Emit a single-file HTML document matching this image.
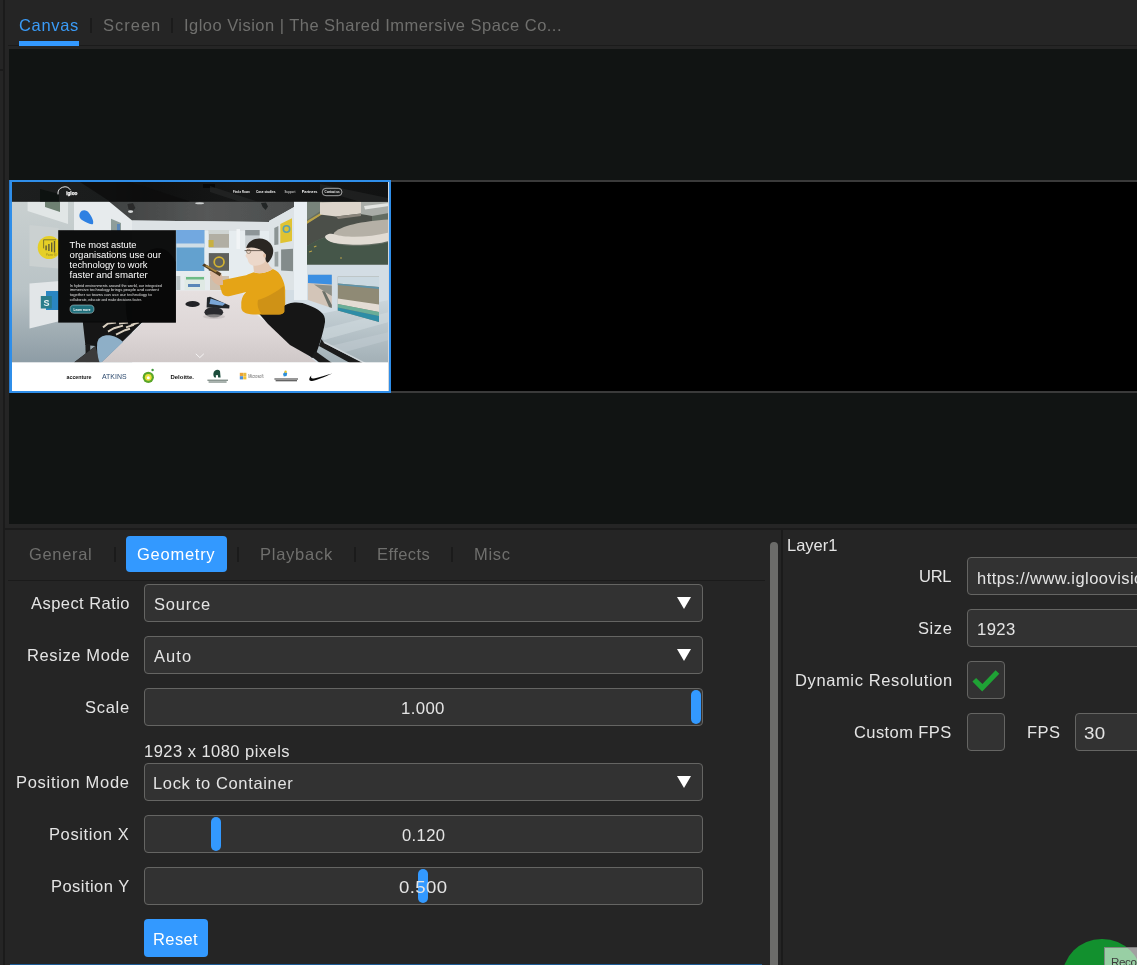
<!DOCTYPE html>
<html lang="en">
<head>
<meta charset="utf-8">
<title>Canvas</title>
<style>
html,body{margin:0;padding:0;}
body{width:1137px;height:965px;overflow:hidden;background:#252525;position:relative;font-family:"Liberation Sans",sans-serif;}
.a{position:absolute;}
.t{position:absolute;transform-origin:0 0;will-change:transform;white-space:pre;line-height:20px;height:20px;}
.box{position:absolute;box-sizing:border-box;background:#323232;border:1px solid #656563;border-radius:4px;}
.sep{position:absolute;width:2px;height:14.5px;background:#1b1b1b;}
.h{position:absolute;background:#3399ff;border-radius:5px;}
.tri{position:absolute;width:0;height:0;border-left:7.5px solid transparent;border-right:7.5px solid transparent;border-top:12px solid #fff;}
</style>
</head>
<body>
<!-- frame dividers -->
<div class="a" style="left:3px;top:0;width:2px;height:965px;background:#1b1b1b"></div>
<div class="a" style="left:0;top:69px;width:3px;height:2px;background:#1b1b1b"></div>
<div class="a" style="left:8px;top:45px;width:1129px;height:1px;background:#1b1b1b"></div>
<div class="a" style="left:19px;top:41px;width:60px;height:5px;background:#3399ff"></div>
<div class="sep" style="left:90px;top:18px"></div>
<div class="sep" style="left:171px;top:18px"></div>

<!-- canvas -->
<div class="a" style="left:9px;top:49px;width:1128px;height:475px;background:#111413"></div>
<div class="a" style="left:9px;top:180px;width:1140px;height:213px;box-sizing:border-box;background:#000;border:2px solid #3a3a3a"></div>
<div class="a" style="left:9px;top:180px;width:1px;height:213px;background:#2779cb"></div>
<div class="a" id="layer" style="left:10px;top:180px;width:381px;height:213px;box-sizing:border-box;border:2px solid #2f8ee9;background:#fff;overflow:hidden">
<svg class="a" style="left:0;top:0;will-change:transform" width="377" height="209" viewBox="12 182 377 209">
<defs>
<filter id="bl" x="-5%" y="-5%" width="110%" height="110%"><feGaussianBlur stdDeviation="0.45"/></filter>
<filter id="bl2" x="-5%" y="-5%" width="110%" height="110%"><feGaussianBlur stdDeviation="1.2"/></filter>
<linearGradient id="lw" x1="0" y1="0" x2="0" y2="1"><stop offset="0" stop-color="#c9d0d0"/><stop offset="0.55" stop-color="#b9c3c6"/><stop offset="1" stop-color="#8d9ca5"/></linearGradient>
<linearGradient id="ceil" x1="0" y1="0" x2="1" y2="0"><stop offset="0" stop-color="#3f4141"/><stop offset="0.5" stop-color="#565858"/><stop offset="1" stop-color="#4a4c4c"/></linearGradient>
<linearGradient id="fl" x1="0" y1="0" x2="0" y2="1"><stop offset="0" stop-color="#c9d4d9"/><stop offset="1" stop-color="#9aa8ae"/></linearGradient>
<linearGradient id="tb" x1="0" y1="0" x2="0" y2="1"><stop offset="0" stop-color="#e6e0e0"/><stop offset="0.6" stop-color="#ddd6d6"/><stop offset="1" stop-color="#cfc8c8"/></linearGradient>
<linearGradient id="hd" x1="0" y1="0" x2="1" y2="0"><stop offset="0" stop-color="#1d1f1f"/><stop offset="0.25" stop-color="#1a1c1c"/><stop offset="0.35" stop-color="#0e0f0f"/><stop offset="0.6" stop-color="#161717"/><stop offset="1" stop-color="#111212"/></linearGradient>
<clipPath id="cp"><rect x="12" y="201" width="376" height="161.6"/></clipPath>
</defs>
<g clip-path="url(#cp)"><g filter="url(#bl)">
<!-- base: back wall -->
<rect x="12" y="201" width="377" height="162" fill="#e6ecef"/>
<!-- left wall -->
<polygon points="12,201 108.5,201 132.2,220.5 132.2,363 12,363" fill="url(#lw)"/>
<!-- left wall panels -->
<polygon points="27.6,201 68,201 68,224 27.6,211" fill="#e1e6e6"/>
<polygon points="45,201 60,201 60,212 45,207" fill="#6e8072"/>
<polygon points="74,201 108.5,201 132.2,220.5 132.2,231 74,231" fill="#e7ebed"/>
<path d="M80 213 C82 209 87 210 89 213 C92 217 94 221 93 224 C90 225 86 222 82 220 C79 218 79 215 80 213Z" fill="#2d80e2"/>
<polygon points="111,218.7 121,223 121,231 111,231" fill="#8e9d9a"/><rect x="117" y="224" width="3" height="7" fill="#5a86b8"/>
<polygon points="29.5,225 58.5,228 58.5,268.5 29.5,266" fill="#cbd1d1"/>
<circle cx="49.3" cy="247.5" r="11.6" fill="#e6cf26"/>
<path d="M43.6 248.4v-8.6h12.4" fill="none" stroke="#55532e" stroke-width="0.7"/>
<path d="M45.4 245.6v4.6h1.4v-4.6zm2.8 -1.6v7h1.4v-7zm2.8 -1.6v9.4h1.4v-9.4zm2.8 -1.4v11.6h1.4v-11.6z" fill="#5f5c36"/>
<text x="46" y="255.6" font-family="'Liberation Sans',sans-serif" font-size="2.6" fill="#9a8a22">Power BI</text>
<polygon points="29.5,283.6 60,281 60,321 29.5,328.6" fill="#e2e6e8"/>
<rect x="46" y="291" width="13" height="19" fill="#2a86c2"/>
<rect x="40.8" y="296" width="11" height="12.5" fill="#2b7d8c"/>
<text x="43.4" y="305.6" font-family="'Liberation Sans',sans-serif" font-size="9" font-weight="bold" fill="#e9f1f3">S</text>
<!-- ceiling -->
<polygon points="108.5,201 306.3,201 294.4,207 268.9,222 132.2,220.5" fill="url(#ceil)"/>
<polygon points="132.2,220.5 268.9,222 268.9,231 132.2,231" fill="#dde2e5"/>
<ellipse cx="199.6" cy="203.2" rx="4.4" ry="1" fill="#c9cccc"/>
<polygon points="261,203 266,202.4 268,206.4 265.6,210 262.6,207" fill="#242626"/>
<polygon points="127.4,204 133,203 135.4,208 132,212 128.4,209" fill="#2a2c2c"/>
<ellipse cx="130.6" cy="211.6" rx="2.6" ry="1.3" fill="#d9dcdc"/>
<!-- right wall -->
<polygon points="269,221 306,201 389,201 389,363 269,363" fill="#d3dde4"/>
<polygon points="269,221 294,207 294,290 269,290" fill="#dde3e6"/>
<polygon points="294,201 307,201 307,300 294,300" fill="#e9eff3"/>
<polygon points="280.3,224 292,218.2 292,241 280.3,243.2" fill="#e0c332"/>
<circle cx="286.5" cy="229" r="3.2" fill="none" stroke="#5aa0b0" stroke-width="1.6"/>
<polygon points="274.3,228 278.4,226 278.4,244.4 274.3,245" fill="#8c9494"/>
<polygon points="274.6,252 278.3,251.6 278.3,266.4 274.6,266.4" fill="#9aa2a2"/>
<polygon points="281.1,249.6 293,248.7 293,271.3 281.1,270.4" fill="#838b8b"/>
<!-- big aerial picture -->
<rect x="307" y="201" width="82" height="63.6" fill="#646d63"/>
<polygon points="307,201 322,201 322,210 307,220" fill="#78837a"/>
<polygon points="307,221 324,211 324,213.4 307,224" fill="#b9a24a"/>
<polygon points="307,224 322,214.5 372,214.5 372,234 333,234 318,240 307,246" fill="#4b4f49"/>
<polygon points="320,202.3 361,201.5 361,213.4 336,216.4 320,214.6" fill="#dcd5cb"/>
<polygon points="336,216.4 361,213.4 361,216 338,219" fill="#8a857c"/>
<polygon points="361,201.5 389,201.5 389,213 372,216 361,214" fill="#a9ada8"/>
<polygon points="364,206 389,203 389,206 365,209.4" fill="#e3e5e2"/>
<path d="M333.8 233 C340 226 362 221 389 219.5 L389 237 C370 240 350 241 333.8 236Z" fill="#b5b0a6"/>
<path d="M325.2 236 C328 233.5 332 233.4 335 234.6 C345 238 370 237.6 389 232.6 L389 241 C372 245.6 345 246 331 242 C327 240.6 324.6 238.4 325.2 236Z" fill="#e1dbd3"/>
<path d="M307 246 L318 240 L325 237.6 C326 242 340 246.6 360 246 C372 245.6 382 244 389 242 L389 264.6 L307 264.6Z" fill="#45574a"/>
<path d="M309 252 l3 -1 M314 247 l2.4 -1 M340 258 l2 0" stroke="#b9a24a" stroke-width="1.2"/>
<!-- floor / lower right wall shading -->
<polygon points="300,318 389,300 389,363 318,363" fill="url(#fl)" opacity="0.85"/>
<polygon points="318,330 389,312 389,322 324,340" fill="#d3dde2" opacity="0.5"/>
<polygon points="330,346 389,332 389,340 338,354" fill="#c3ced4" opacity="0.5"/>
<!-- lower right pictures -->
<polygon points="308,274.7 331.8,274.7 331.8,308 308,300" fill="#d3c5b8"/>
<polygon points="308,274.7 331.8,274.7 331.8,284.4 308,283" fill="#3a8fe2"/>
<polygon points="314,284.4 331.8,285.4 331.8,296 322,290" fill="#8d9088"/>
<polygon points="322,291 325,291.6 331.8,305 331.8,308 329,307" fill="#6b6f68"/>
<polygon points="337.8,276.5 379,276.5 379,322 337.8,310.5" fill="#8f8a75"/>
<polygon points="337.8,276.5 379,276.5 379,287 337.8,283.4" fill="#cbd9e1"/>
<polygon points="337.8,283.4 379,287 379,289 337.8,285" fill="#5f93a8"/>
<polygon points="337.8,298.4 379,304.6 379,312 337.8,304" fill="#e3dcd4"/>
<polygon points="337.8,304 379,312 379,316 337.8,307.6" fill="#6aae98"/>
<polygon points="337.8,307.6 379,316 379,322 337.8,310.5" fill="#2f8da6"/>
<!-- back wall pictures -->
<rect x="176.3" y="230" width="28" height="41" fill="#64a1cf"/>
<rect x="176.3" y="230" width="28" height="14" fill="#72a8e0"/>
<rect x="176.3" y="243.5" width="28" height="4" fill="#cfdde6"/>
<rect x="208.8" y="230" width="20.2" height="17.7" fill="#b1aea3"/><rect x="208.8" y="230" width="20.2" height="4" fill="#cfd4d2"/>
<rect x="208.6" y="240" width="5" height="7" fill="#c8b040"/>
<rect x="208.8" y="253.1" width="20.2" height="17.7" fill="#5e615b"/>
<circle cx="219.1" cy="262" r="4.9" fill="none" stroke="#d3b232" stroke-width="1.7"/>
<rect x="184.5" y="276" width="20.5" height="14" fill="#dfe9e4"/>
<rect x="186" y="277" width="18" height="2.5" fill="#6dbb86"/>
<rect x="188" y="284" width="12" height="3" fill="#5a86b8"/>
<rect x="176.3" y="276" width="4" height="14" fill="#b9c2c4"/>
<rect x="210" y="276" width="19" height="14" fill="#cdbfae"/>
<rect x="245.2" y="230" width="14.4" height="18" fill="#c9d0d4"/>
<rect x="245.2" y="230" width="14.4" height="5.4" fill="#8d9598"/>
<rect x="236.5" y="229" width="3.5" height="20" fill="#f1f4f6"/>
<!-- table -->
<polygon points="101,362.6 176.6,290.5 241,290.5 256,314 317,362.6" fill="url(#tb)"/>
<!-- seated person bottom-left -->
<polygon points="82.7,321 143.5,321 101,362.6 74,362.6 95.5,346 85.4,345" fill="#121313"/>
<polygon points="85.4,344 90.2,344 90.5,362.6 85.8,362.6" fill="#1b1c1c"/>
<polygon points="74,362.6 95.5,346 99.8,362.6" fill="#3a3b3b"/>
<path d="M97.2 343 C98 337 104 334.5 111 335.5 C116 336.5 120 339 123 342 L101.5 362.6 L99.5 362.6 C97.5 357 96.5 349 97.2 343Z" fill="#8eafc7"/>
<path d="M103 327.4 l5 -4 l8 -1 M108 331.6 l6 -3.4 l9 -2.6 M116 334.6 l9 -4.4 l5 -1.4 M119 323.6 l9 -1.2 M131 325 l8 -2.6 M126 327.4 l8 -2.6" stroke="#d9cfbf" stroke-width="2" fill="none"/>
<!-- man -->
<polygon points="255,309 286,305 300,320 313,358 290,345 268,324" fill="#161616"/>
<path d="M218.6 281.2 C228 279 238 277 246.2 275.3 C249 274 252 272.6 254 272.3 C260 275 268 272 272.8 268.9 C277 270.5 280 273.5 281.6 277.2 C284 282 285 286 285.2 290 L285.2 310.7 C284 313 282 314.6 279 314.6 L256 314.6 C248 314.6 242 313 241.3 308 L241.3 301.9 C242 297 244 294 246.2 292 L230 296 C226 296.6 223.5 296 222 293 Z" fill="#e5a413"/>
<path d="M258 300 C266 298 276 292 284 286 L285.2 310.7 C284 313 282 314.6 279 314.6 L262 314.6 C258 310 257 305 258 300Z" fill="#c98d14" opacity="0.8"/>
<path d="M253 263.5 L266 259 L269.8 266 L272.8 268.9 C268 272 260 275 254 272.3Z" fill="#e4c8b3"/>
<path d="M246 247 C250 243.5 260 243.5 264 248 L266 260 C264 264.5 258 266.5 252.5 265.4 C249.5 264.5 248 262 247.6 259 L245.4 256 L246.8 252.6Z" fill="#ecd8ca"/>
<path d="M246.2 248 C247.5 241.5 254 238.2 260 238.4 C267 238.8 272.5 243.5 273.2 249.7 C273.6 255 271 260 267.8 262.8 C266 262 265 259.5 265.6 257 C266.2 254.5 264.5 252.5 262.5 251 C258 247.6 252 246.6 246.2 248Z" fill="#2a2622"/>
<path d="M244.6 250.6h17.5" stroke="#4a4036" stroke-width="0.8"/>
<circle cx="248.6" cy="251.4" r="2.1" fill="none" stroke="#6a5a48" stroke-width="0.6"/>
<ellipse cx="264.6" cy="255.6" rx="1.4" ry="2.2" fill="#e2bfa6"/>
<!-- hand + phone -->
<path d="M209.8 272 C212 269 217 269.5 220 272 C222.5 275 223.2 280 223 285 L218.6 285.2 C214 284 210.5 279 209.8 272Z" fill="#dbb99f"/>
<polygon points="202.2,265.6 204.2,263.4 221.4,273.4 219.8,276.2" fill="#4f3b22"/>
<polygon points="205,266 207,265 217,271 216,272.6" fill="#a8843a"/>
<!-- devices on table -->
<ellipse cx="192.6" cy="304" rx="7.2" ry="3" fill="#222426"/>
<polygon points="207,297.4 210,296.8 229.6,305.6 229.2,308.6 206.6,307.6" fill="#24272b"/>
<polygon points="210.6,298.6 225.4,303.6 222.6,305.8 209.4,304" fill="#7aa6d6"/>
<ellipse cx="213.8" cy="312.2" rx="9.4" ry="5.2" fill="#292b2d"/>
<ellipse cx="214" cy="316.6" rx="11" ry="2.4" fill="#bdb6b6" opacity="0.6"/>
<!-- chair -->
<path d="M284.5 306 C288 302 300 301 308 305 C318 309 326 313 325 322 C323 334 319 346 316 354 L312 358 C304 350 292 330 284.5 314Z" fill="#151515"/>
<polygon points="321.5,339 324,343 363,363 350,363 319,346" fill="#1b1c1c"/>
<polygon points="315,351 318,353 332,363 320,363 312,357" fill="#1b1c1c"/>
<polygon points="324.5,341.5 364,362 366,363 363,363 324,343" fill="#cfd6da"/>
</g></g>
<!-- dark text box -->
<rect x="58.2" y="230.2" width="117.7" height="92.4" fill="#0a0b0b" opacity="0.985"/>
<path d="M128 322.6 C122 300 128 262 150 250 C165 244 172 255 175.9 262 L175.9 322.6Z" fill="#030404" opacity="0.55"/>
<g font-family="'Liberation Sans',sans-serif" fill="#fff">
<text x="69.6" y="247.8" font-size="8.6" textLength="66.9" lengthAdjust="spacingAndGlyphs">The most astute</text>
<text x="69.6" y="257.7" font-size="8.7" textLength="91.5" lengthAdjust="spacingAndGlyphs">organisations use our</text>
<text x="69.6" y="267.7" font-size="8.7" textLength="77.9" lengthAdjust="spacingAndGlyphs">technology to work</text>
<text x="69.6" y="277.6" font-size="8.7" textLength="78.1" lengthAdjust="spacingAndGlyphs">faster and smarter</text>
<g font-size="3.9" fill="#f2f2f2" opacity="0.92">
<text x="69.8" y="286.7" textLength="92" lengthAdjust="spacingAndGlyphs">In hybrid environments around the world, our integrated</text>
<text x="69.8" y="291.3" textLength="89" lengthAdjust="spacingAndGlyphs">immersive technology brings people and content</text>
<text x="69.8" y="296" textLength="82" lengthAdjust="spacingAndGlyphs">together so teams can use our technology to</text>
<text x="69.8" y="300.8" textLength="72" lengthAdjust="spacingAndGlyphs">collaborate, educate and make decisions faster.</text>
</g>
</g>
<rect x="70" y="305" width="24" height="8.2" rx="4.1" fill="#1f6f7b" stroke="#cfe3e6" stroke-width="0.5"/>
<text x="73.6" y="310.6" font-family="'Liberation Sans',sans-serif" font-size="3.8" font-weight="bold" fill="#fff" textLength="16.8" lengthAdjust="spacingAndGlyphs">Learn more</text>
<!-- chevron -->
<path d="M195.8 353.8 L199.8 357.6 L203.8 353.8" fill="none" stroke="#fff" stroke-width="0.9" opacity="0.9"/>
<!-- site header -->
<rect x="12" y="182" width="376" height="19.8" fill="url(#hd)"/>
<polygon points="40,189 59,194 59,201.6 40,201.6" fill="#0d1210"/>
<polygon points="80,182 130,182 190,201.6 110,201.6" fill="#0c0d0d" opacity="0.8"/>
<rect x="203" y="184" width="12" height="4" fill="#070707"/>
<polygon points="210,186 258,201.8 240,201.8 210,192" fill="#2a2c2c" opacity="0.55"/>
<polygon points="320,184 388,198 388,201.8 360,201.8 320,190" fill="#2a2c2c" opacity="0.5"/>
<path d="M58 194.4 A6.8 6.8 0 0 1 70.6 190.2" fill="none" stroke="#fff" stroke-width="0.9"/>
<text x="66.2" y="195.4" font-family="'Liberation Sans',sans-serif" font-size="6.2" font-weight="bold" fill="#fff" stroke="#fff" stroke-width="0.25" textLength="11.2" lengthAdjust="spacingAndGlyphs">igloo</text>
<g font-family="'Liberation Sans',sans-serif" font-size="3.6" font-weight="bold" fill="#f2f2f2">
<text x="233" y="193.4" textLength="16.8" lengthAdjust="spacingAndGlyphs">Find a Room</text>
<text x="256" y="193.4" textLength="19.6" lengthAdjust="spacingAndGlyphs">Case studies</text>
<text x="284.4" y="193.4" textLength="11" lengthAdjust="spacingAndGlyphs" fill="#bdbdbd">Support</text>
<text x="301.8" y="193.4" textLength="15.6" lengthAdjust="spacingAndGlyphs">Partners</text>
<text x="324.6" y="193.4" textLength="15" lengthAdjust="spacingAndGlyphs">Contact us</text>
</g>
<rect x="322.2" y="188.3" width="19.8" height="7.4" rx="3.7" fill="none" stroke="#fff" stroke-width="0.6"/>
<!-- white logo band -->
<rect x="12" y="362.6" width="377" height="28.4" fill="#fff"/>
<rect x="388" y="182" width="1" height="209" fill="#d3d8dd"/>
<g font-family="'Liberation Sans',sans-serif" fill="#111">
<text x="66.5" y="379.2" font-size="5.6" font-weight="bold" textLength="25" lengthAdjust="spacingAndGlyphs">accenture</text>
<text x="102" y="379" font-size="7" fill="#2d4a6e" textLength="24.5" lengthAdjust="spacingAndGlyphs">ATKINS</text>
<text x="170.5" y="378.7" font-size="6.2" font-weight="bold" textLength="23.5" lengthAdjust="spacingAndGlyphs">Deloitte.</text>
<text x="248.2" y="378" font-size="4.6" fill="#6a6a6a" textLength="15.4" lengthAdjust="spacingAndGlyphs">Microsoft</text>
</g>
<circle cx="148.3" cy="377.3" r="5.6" fill="#5aa628"/>
<circle cx="148.3" cy="377.3" r="3.4" fill="#e9e13a"/>
<circle cx="148.3" cy="377.8" r="1.5" fill="#fff"/>
<circle cx="152.6" cy="370" r="1.2" fill="#3f9a3a"/>
<path d="M213.4 373.4 c0.6 -3.6 4.6 -4.6 6.6 -2.4 l0.6 6.6 l-2.4 0 l-0.4 -2.6 l-2 0.2 l0.2 2.4 l-1.4 0 c-1 -1.2 -1.4 -2.8 -1.2 -4.2z" fill="#1d4d3c"/>
<path d="M207.4 380.2h20.6M208.6 382h18" stroke="#55665f" stroke-width="1"/>
<rect x="239.8" y="372.8" width="3.2" height="3.2" fill="#e8a33a"/><rect x="243.2" y="372.8" width="3.2" height="3.2" fill="#e9b93c"/>
<rect x="239.8" y="376.2" width="3.2" height="3.2" fill="#4f8fd6"/><rect x="243.2" y="376.2" width="3.2" height="3.2" fill="#f0c23a"/>
<path d="M283 374 l2 -2.4 l2.2 1.4 l-0.6 3 l-2.8 0.4z" fill="#2d8fd8"/><circle cx="285.6" cy="371.8" r="1.2" fill="#e9c62f"/>
<path d="M274.4 379h23.6M275.6 380.8h21.4" stroke="#333" stroke-width="1.1"/>
<path d="M332.4 373.4 C324 377 315 380.6 312 381 C308.6 381.4 308.4 378.4 311.4 375.6 C310.4 378 311.6 379 314 378.4 C319 377.2 326 375 332.4 373.4Z" fill="#0a0a0a"/>
</svg>

</div>

<!-- horizontal divider -->
<div class="a" style="left:5px;top:528px;width:1132px;height:2px;background:#1b1b1b"></div>
<div class="a" style="left:781px;top:530px;width:2px;height:435px;background:#1b1b1b"></div>

<!-- left bottom panel -->
<div class="a" style="left:126px;top:536px;width:101px;height:36px;background:#3399ff;border-radius:4px"></div>
<div class="sep" style="left:114px;top:547px"></div>
<div class="sep" style="left:237px;top:547px"></div>
<div class="sep" style="left:354px;top:547px"></div>
<div class="sep" style="left:451px;top:547px"></div>
<div class="a" style="left:8px;top:580px;width:757px;height:1px;background:#1b1b1b"></div>

<div class="box" style="left:144px;top:584px;width:559px;height:38px"></div>
<div class="box" style="left:144px;top:636px;width:559px;height:38px"></div>
<div class="box" style="left:144px;top:688px;width:559px;height:38px"></div>
<div class="box" style="left:144px;top:763px;width:559px;height:38px"></div>
<div class="box" style="left:144px;top:815px;width:559px;height:38px"></div>
<div class="box" style="left:144px;top:867px;width:559px;height:38px"></div>
<div class="tri" style="left:676.5px;top:597px"></div>
<div class="tri" style="left:676.5px;top:649px"></div>
<div class="tri" style="left:676.5px;top:776px"></div>
<div class="h" style="left:691px;top:690px;width:10px;height:34px"></div>
<div class="h" style="left:211.2px;top:817px;width:10.3px;height:34px"></div>
<div class="h" style="left:418.2px;top:869px;width:10.2px;height:34px"></div>
<div class="a" style="left:144px;top:919px;width:64px;height:38px;background:#3399ff;border-radius:4px"></div>
<div class="a" style="left:10px;top:964px;width:752px;height:1px;background:#1d5a94"></div>
<div class="a" style="left:770px;top:542px;width:8px;height:440px;background:#6c6c6a;border-radius:4px"></div>

<!-- right bottom panel -->
<div class="box" style="left:967px;top:557px;width:200px;height:38px"></div>
<div class="box" style="left:967px;top:609px;width:200px;height:38px"></div>
<div class="box" style="left:967px;top:661px;width:38px;height:38px"></div>
<div class="box" style="left:967px;top:713px;width:38px;height:38px"></div>
<div class="box" style="left:1075px;top:713px;width:100px;height:38px"></div>
<svg class="a" style="left:967px;top:661px" width="38" height="38" viewBox="0 0 38 38"><polygon points="5.4,20.4 9.1,17 15.4,23 28.6,9.3 32.3,12.7 15.2,30.4" fill="#1fa235"/></svg>
<div class="t" style="left:977px;top:567.5px;color:#e4e4e4;font-size:16.5px;letter-spacing:0.45px;width:160px;overflow:hidden">https://www.igloovision.com</div>

<div class="t" style="left:19.0px;top:15px;color:#3a9bf7;font-size:16.5px;letter-spacing:0.68px">Canvas</div>
<div class="t" style="left:102.6px;top:15px;color:#6f6f6d;font-size:16.5px;letter-spacing:1.00px">Screen</div>
<div class="t" style="left:184.2px;top:15px;color:#6f6f6d;font-size:16.5px;letter-spacing:0.47px">Igloo Vision | The Shared Immersive Space Co...</div>
<div class="t" style="left:29.2px;top:544px;color:#6f6f6d;font-size:16.5px;letter-spacing:0.68px">General</div>
<div class="t" style="left:136.5px;top:544px;color:#ffffff;font-size:16.5px;letter-spacing:0.74px">Geometry</div>
<div class="t" style="left:259.5px;top:544px;color:#6f6f6d;font-size:16.5px;letter-spacing:0.74px">Playback</div>
<div class="t" style="left:376.6px;top:544px;color:#6f6f6d;font-size:16.5px;letter-spacing:0.42px">Effects</div>
<div class="t" style="left:473.6px;top:544px;color:#6f6f6d;font-size:16.5px;letter-spacing:0.70px">Misc</div>
<div class="t" style="left:30.6px;top:593px;color:#e4e4e4;font-size:16.5px;letter-spacing:0.45px">Aspect Ratio</div>
<div class="t" style="left:26.5px;top:645px;color:#e4e4e4;font-size:16.5px;letter-spacing:0.62px">Resize Mode</div>
<div class="t" style="left:84.7px;top:697px;color:#e4e4e4;font-size:16.5px;letter-spacing:0.72px">Scale</div>
<div class="t" style="left:16.4px;top:772px;color:#e4e4e4;font-size:16.5px;letter-spacing:0.70px">Position Mode</div>
<div class="t" style="left:49.4px;top:824px;color:#e4e4e4;font-size:16.5px;letter-spacing:0.60px">Position X</div>
<div class="t" style="left:50.5px;top:876px;color:#e4e4e4;font-size:16.5px;letter-spacing:0.46px">Position Y</div>
<div class="t" style="left:153.5px;top:594px;color:#e4e4e4;font-size:16.5px;letter-spacing:0.76px">Source</div>
<div class="t" style="left:154.0px;top:646px;color:#e4e4e4;font-size:16.5px;letter-spacing:1.07px">Auto</div>
<div class="t" style="left:153.1px;top:773px;color:#e4e4e4;font-size:16.5px;letter-spacing:0.65px">Lock to Container</div>
<div class="t" style="left:143.8px;top:741px;color:#e4e4e4;font-size:16.5px;letter-spacing:0.47px">1923 x 1080 pixels</div>
<div class="t" style="left:401.3px;top:698px;color:#e4e4e4;font-size:16.5px;letter-spacing:0.35px;transform:scaleX(1.017)">1.000</div>
<div class="t" style="left:401.6px;top:825px;color:#e4e4e4;font-size:16.5px;letter-spacing:0.35px;transform:scaleX(1.007)">0.120</div>
<div class="t" style="left:398.6px;top:877px;color:#e4e4e4;font-size:16.5px;letter-spacing:0.35px;transform:scaleX(1.126)">0.500</div>
<div class="t" style="left:153.2px;top:929px;color:#ffffff;font-size:16.5px;letter-spacing:0.40px">Reset</div>
<div class="t" style="left:786.5px;top:535px;color:#e4e4e4;font-size:16.5px;letter-spacing:-0.02px">Layer1</div>
<div class="t" style="left:919.0px;top:566px;color:#e4e4e4;font-size:16.5px;letter-spacing:-0.25px">URL</div>
<div class="t" style="left:918.0px;top:618px;color:#e4e4e4;font-size:16.5px;letter-spacing:0.57px">Size</div>
<div class="t" style="left:795.0px;top:670px;color:#e4e4e4;font-size:16.5px;letter-spacing:0.62px">Dynamic Resolution</div>
<div class="t" style="left:854.4px;top:722px;color:#e4e4e4;font-size:16.5px;letter-spacing:0.42px">Custom FPS</div>
<div class="t" style="left:1027.0px;top:722px;color:#e4e4e4;font-size:16.5px;letter-spacing:0.45px">FPS</div>
<div class="t" style="left:1084.3px;top:723px;color:#e4e4e4;font-size:16.5px;letter-spacing:0.35px;transform:scaleX(1.135)">30</div>
<div class="t" style="left:976.9px;top:619px;color:#e4e4e4;font-size:16.5px;letter-spacing:0.35px;transform:scaleX(1.012)">1923</div>

<!-- green circle + tooltip -->
<div class="a" style="left:1062.3px;top:938.7px;width:79.4px;height:79.4px;border-radius:50%;background:#12902e"></div>
<div class="a" style="left:1104px;top:947px;width:60px;height:30px;box-sizing:border-box;background:rgba(255,255,255,0.57);border:1px solid rgba(120,120,120,0.8)"></div>
<div class="t" style="left:1110.6px;top:951.5px;color:#3c3c3c;font-size:11.6px;letter-spacing:-0.35px">Record</div>
</body>
</html>
